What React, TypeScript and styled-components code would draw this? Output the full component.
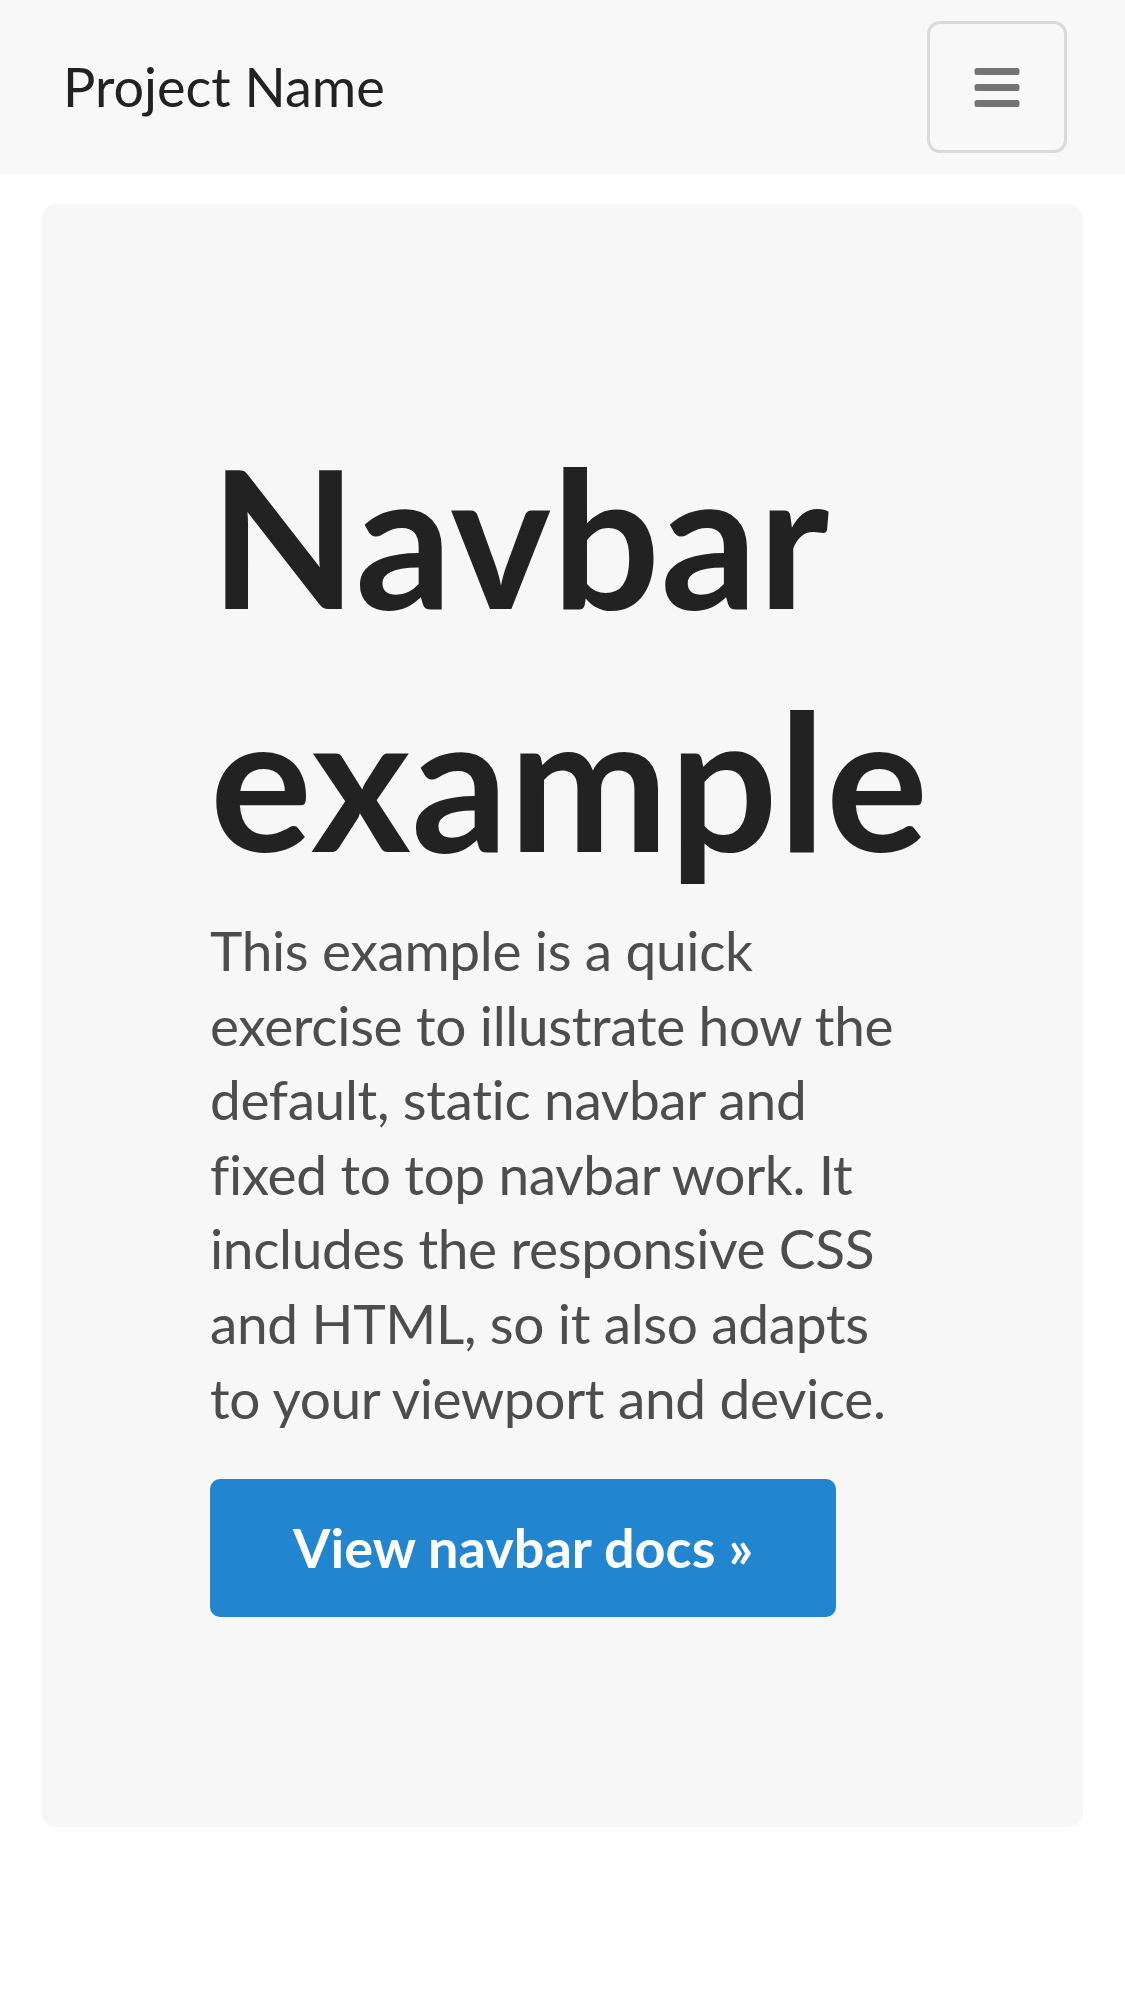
import React, { FC } from "react";
import styled, { createGlobalStyle } from "styled-components";

const GlobalStyle = createGlobalStyle`
  html, body {
    margin: 0;
    padding: 0;
    background: #fff;
  }
  body {
    font-family: Lato, "Open Sans", "Liberation Sans", sans-serif;
    color: #222;
  }
  * {
    box-sizing: border-box;
  }
`;

const Navbar = styled.nav`
  display: flex;
  align-items: center;
  justify-content: space-between;
  height: 174px;
  padding: 0 58px 0 63px;
  background-color: #f8f8f8;
`;

const Brand = styled.a`
  font-size: 54px;
  line-height: 1.2;
  color: #222;
  text-decoration: none;
`;

const Toggle = styled.button`
  display: flex;
  align-items: center;
  justify-content: center;
  width: 140px;
  height: 132px;
  padding: 0;
  background: transparent;
  border: 3px solid #dadada;
  border-radius: 13px;
  cursor: pointer;
`;

const Main = styled.main`
  padding: 30px 42px 0;
`;

const Jumbotron = styled.section`
  padding: 210px 168px;
  background-color: #f7f7f7;
  border-radius: 15px;
`;

const Heading = styled.h1`
  margin: 0 0 13px;
  font-size: 191px;
  font-weight: 700;
  line-height: 243px;
  letter-spacing: 0.5px;
  color: #222;
`;

const Lead = styled.p`
  margin: 0 0 44px;
  font-size: 55px;
  line-height: 74.6px;
  letter-spacing: -0.35px;
  color: #4d4d4d;
`;

const Button = styled.a`
  display: inline-block;
  padding: 30px 80px;
  font-size: 54px;
  font-weight: 700;
  line-height: 72px;
  color: #fff;
  text-decoration: none;
  background-color: #2185d0;
  border: 3px solid #2185d0;
  border-radius: 10px;
`;

const BarsIcon: FC = () => (
  <svg width="46" height="40" viewBox="0 0 46 40" aria-hidden="true">
    <rect x="0.5" y="1" width="45" height="7" rx="2.5" fill="#747474" />
    <rect x="0.5" y="17" width="45" height="7" rx="2.5" fill="#747474" />
    <rect x="0.5" y="33" width="45" height="7" rx="2.5" fill="#747474" />
  </svg>
);

const App: FC = () => {
  return (
    <>
      <GlobalStyle />
      <Navbar>
        <Brand href="#">Project Name</Brand>
        <Toggle aria-label="Toggle navigation">
          <BarsIcon />
        </Toggle>
      </Navbar>
      <Main>
        <Jumbotron>
          <Heading>Navbar example</Heading>
          <Lead>
            This example is a quick exercise to illustrate how the default,
            static navbar and fixed to top navbar work. It includes the
            responsive CSS and HTML, so it also adapts to your viewport and
            device.
          </Lead>
          <Button href="#">View navbar docs &raquo;</Button>
        </Jumbotron>
      </Main>
    </>
  );
};

export default App;
